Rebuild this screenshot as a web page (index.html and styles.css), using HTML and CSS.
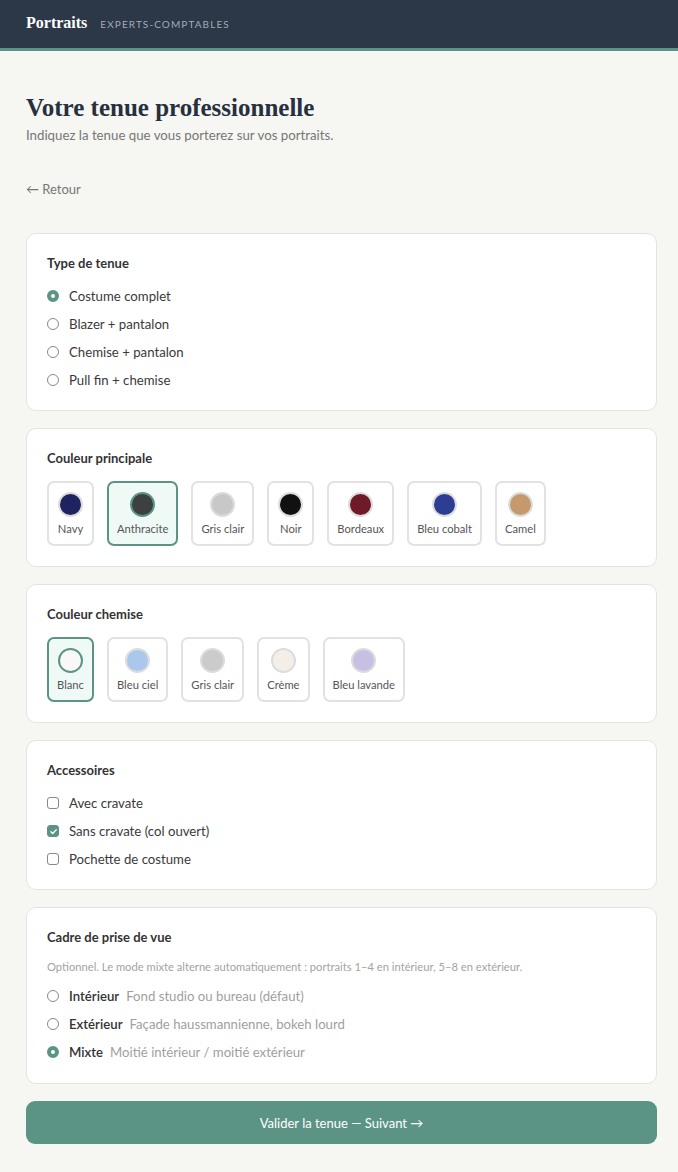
FILE: index.html
```html
<!DOCTYPE html>
<html lang="fr">
<head>
<meta charset="utf-8">
<title>Votre tenue professionnelle</title>
<link rel="stylesheet" href="styles.css">
</head>
<body>
<header class="topbar">
  <span class="brand">Portraits</span>
  <span class="brand-sub">EXPERTS-COMPTABLES</span>
</header>

<main class="page">
  <h1 class="title">Votre tenue professionnelle</h1>
  <p class="subtitle">Indiquez la tenue que vous porterez sur vos portraits.</p>

  <a class="back" href="#">&larr; Retour</a>

  <section class="card">
    <h2 class="card-title">Type de tenue</h2>
    <ul class="options">
      <li class="opt"><span class="radio on"></span>Costume complet</li>
      <li class="opt"><span class="radio"></span>Blazer + pantalon</li>
      <li class="opt"><span class="radio"></span>Chemise + pantalon</li>
      <li class="opt"><span class="radio"></span>Pull fin + chemise</li>
    </ul>
  </section>

  <section class="card">
    <h2 class="card-title">Couleur principale</h2>
    <div class="swatches">
      <div class="swatch"><span class="dot" style="background:#1f2360"></span>Navy</div>
      <div class="swatch sel"><span class="dot" style="background:#3d3f40"></span>Anthracite</div>
      <div class="swatch"><span class="dot" style="background:#c8c8c8"></span>Gris clair</div>
      <div class="swatch"><span class="dot" style="background:#111111"></span>Noir</div>
      <div class="swatch"><span class="dot" style="background:#6e1a28"></span>Bordeaux</div>
      <div class="swatch"><span class="dot" style="background:#2c3d94"></span>Bleu cobalt</div>
      <div class="swatch"><span class="dot" style="background:#c49a6c"></span>Camel</div>
    </div>
  </section>

  <section class="card">
    <h2 class="card-title">Couleur chemise</h2>
    <div class="swatches">
      <div class="swatch sel"><span class="dot" style="background:#f8f8f8"></span>Blanc</div>
      <div class="swatch"><span class="dot" style="background:#a9c8ec"></span>Bleu ciel</div>
      <div class="swatch"><span class="dot" style="background:#cbcbcb"></span>Gris clair</div>
      <div class="swatch"><span class="dot" style="background:#f3efe6"></span>Crème</div>
      <div class="swatch"><span class="dot" style="background:#c8c0e4"></span>Bleu lavande</div>
    </div>
  </section>

  <section class="card">
    <h2 class="card-title">Accessoires</h2>
    <ul class="options">
      <li class="opt"><span class="check"></span>Avec cravate</li>
      <li class="opt"><span class="check on">
        <svg viewBox="0 0 12 12" width="9" height="9"><path d="M2.5 6.2 L5 8.6 L9.6 3.6" fill="none" stroke="#fff" stroke-width="1.8" stroke-linecap="round" stroke-linejoin="round"/></svg>
      </span>Sans cravate (col ouvert)</li>
      <li class="opt"><span class="check"></span>Pochette de costume</li>
    </ul>
  </section>

  <section class="card">
    <h2 class="card-title">Cadre de prise de vue</h2>
    <p class="note">Optionnel. Le mode mixte alterne automatiquement : portraits 1–4 en intérieur, 5–8 en extérieur.</p>
    <ul class="options">
      <li class="opt"><span class="radio"></span><b>Intérieur</b><span class="desc">Fond studio ou bureau (défaut)</span></li>
      <li class="opt"><span class="radio"></span><b>Extérieur</b><span class="desc">Façade haussmannienne, bokeh lourd</span></li>
      <li class="opt"><span class="radio on"></span><b>Mixte</b><span class="desc">Moitié intérieur / moitié extérieur</span></li>
    </ul>
  </section>

  <button class="next">Valider la tenue — Suivant &rarr;</button>
</main>
</body>
</html>
```

FILE: styles.css
```css
* { box-sizing: border-box; }

body {
  margin: 0;
  background: #f6f6f3;
  font-family: "Lato", "Noto Sans", sans-serif;
  color: #333a40;
}

.topbar {
  height: 51px;
  background: #2c3747;
  border-bottom: 3px solid #5b9484;
  display: flex;
  align-items: center;
  padding: 0 26px 3px;
  gap: 13px;
}
.brand {
  font-family: "Liberation Serif", "DejaVu Serif", serif;
  font-weight: bold;
  font-size: 16px;
  color: #fff;
}
.brand-sub {
  font-size: 10px;
  letter-spacing: 1.1px;
  color: #a3acb8;
  padding-top: 2px;
}

.page {
  width: 631px;
  margin: 0 0 0 26px;
  padding: 42px 0 30px;
}

.title {
  margin: 0;
  font-family: "Liberation Serif", "DejaVu Serif", serif;
  font-weight: bold;
  font-size: 25px;
  color: #27303e;
  line-height: 30px;
}
.subtitle {
  margin: 4px 0 0;
  font-size: 13.25px;
  color: #767676;
}

.back {
  display: inline-block;
  margin: 38px 0 36px;
  font-size: 13px;
  color: #777;
  text-decoration: none;
}

.card {
  background: #fff;
  border: 1px solid #e4e4df;
  border-radius: 10px;
  padding: 20px 20px 16px;
  margin-bottom: 17px;
}
.card-title {
  margin: 0 0 10px;
  font-size: 13px;
  font-weight: bold;
  color: #333;
  line-height: 18px;
}

.options {
  list-style: none;
  margin: 0;
  padding: 0;
}
.opt {
  display: flex;
  align-items: center;
  height: 28px;
  font-size: 13.2px;
  color: #3a3a3a;
}
.opt b {
  font-weight: 600;
  color: #333;
}
.desc {
  color: #a0a0a0;
  margin-left: 7px;
}

.radio {
  width: 12px;
  height: 12px;
  border: 1.5px solid #888;
  border-radius: 50%;
  margin-right: 10px;
  flex: none;
}
.radio.on {
  border: 4px solid #5b9484;
  background: #fff;
}

.check {
  width: 12px;
  height: 12px;
  border: 1.5px solid #888;
  border-radius: 3px;
  margin-right: 10px;
  flex: none;
  display: flex;
  align-items: center;
  justify-content: center;
}
.check.on {
  background: #5b9484;
  border-color: #5b9484;
}

.swatches {
  display: flex;
  flex-wrap: wrap;
  gap: 13px;
  margin-top: 14px;
  padding-bottom: 4px;
}
.swatch {
  height: 65px;
  min-width: 47px;
  padding: 0 8px;
  border: 2px solid #e2e2e2;
  border-radius: 7px;
  display: flex;
  flex-direction: column;
  align-items: center;
  justify-content: center;
  gap: 5px;
  font-size: 11.2px;
  color: #555;
}
.swatch.sel {
  border-color: #5b9484;
  background: #effaf7;
}
.dot {
  width: 25px;
  height: 25px;
  border-radius: 50%;
  border: 2px solid #dcdcdc;
}
.swatch.sel .dot {
  border-color: #5b9484;
}

.note {
  margin: 14px 0 9px;
  font-size: 11.2px;
  color: #a3a3a3;
}
.card:last-of-type {
  padding-bottom: 17px;
}

.next {
  display: block;
  width: 100%;
  height: 43px;
  margin-top: 16px;
  border: none;
  border-radius: 9px;
  background: #5b9484;
  color: #fff;
  font-family: inherit;
  font-size: 13px;
}
```
